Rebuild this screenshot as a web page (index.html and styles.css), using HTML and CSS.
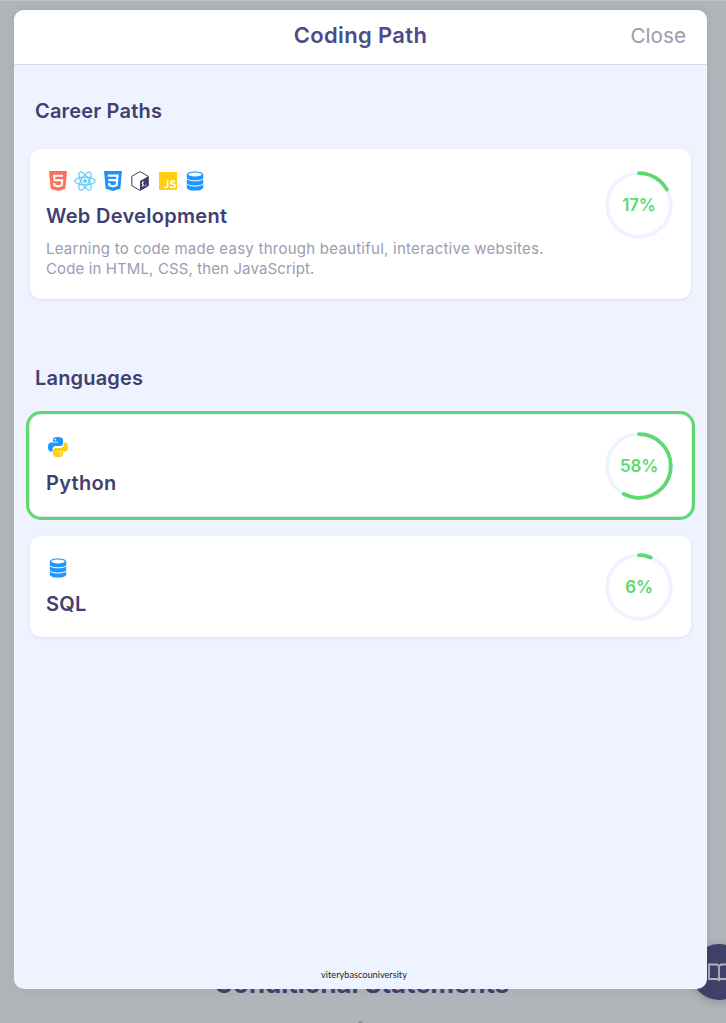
FILE: index.html
```html
<!DOCTYPE html>
<html lang="en">
<head>
    <meta charset="UTF-8">
    <meta name="viewport" content="width=device-width, initial-scale=1.0">
    <title>Coding Path</title>
    <link rel="stylesheet" href="styles.css">
</head>
<body>

<!-- icons used more than once -->
<svg class="defs" width="0" height="0">
    <symbol id="database" viewBox="0 0 20 20">
        <path fill="#1e96ff" d="M1.8 3.5C1.8 1.6 5.3.4 10 .4s8.2 1.2 8.2 3.1v12.900c0 1.900-3.500 3.200-8.200 3.200s-8.200-1.300-8.200-3.200z"/>
        <ellipse cx="10" cy="3.4" rx="6.8" ry="2" fill="#fff"/>
        <path fill="none" stroke="#fff" stroke-width="1" d="M1.300 7.300c1.200 1.700 4.400 2.500 8.700 2.500s7.500-.8 8.700-2.500M1.300 12.500c1.200 1.700 4.400 2.500 8.700 2.500s7.500-.8 8.700-2.500"/>
    </symbol>
</svg>

<div class="page-title">Conditional Statements</div>
<div class="page-dot"></div>
<div class="book-button">
    <svg width="22" height="19" viewBox="0 0 22 19" fill="none" stroke="#b0b5bb" stroke-width="1.8">
        <path d="M1 1.5h8L11 3l2-1.5h8v14.5h-8l-2 1.3-2-1.3H1zM11 3v14"/>
    </svg>
</div>

<div class="modal">
    <header>
        <h1>Coding Path</h1>
        <a class="close">Close</a>
    </header>

    <main>
        <h2 class="career-title">Career Paths</h2>
        <div class="card career">
            <div class="info">
                <div class="icons">
                    <svg viewBox="0 0 20 20">
                        <path fill="#ff705c" d="M1 0h18l-1.7 17.7L10 20l-7.3-2.3z"/>
                        <path fill="none" stroke="#fff" stroke-width="2" d="M15 4.8H6.1l.4 4.5h7.7l-.5 5L10 15.4l-3.600-1.100-.2-2.300"/>
                    </svg>
                    <svg class="react" viewBox="0 0 22 20" fill="none" stroke="#5cc9fa" stroke-width="1.2">
                        <ellipse cx="11" cy="10" rx="10.2" ry="3.9"/>
                        <ellipse cx="11" cy="10" rx="10.2" ry="3.9" transform="rotate(60 11 10)"/>
                        <ellipse cx="11" cy="10" rx="10.2" ry="3.9" transform="rotate(120 11 10)"/>
                        <circle cx="11" cy="10" r="1.9" fill="#5cc9fa" stroke="none"/>
                    </svg>
                    <svg viewBox="0 0 20 20">
                        <path fill="#1e90ff" d="M1 0h18l-1.7 17.7L10 20l-7.3-2.3z"/>
                        <path fill="none" stroke="#fff" stroke-width="2.2" d="M4.8 4.700h9.700l-.8 9.500-3.700 1.200-3.700-1.200-.2-2.200M5.300 9.200h8.600"/>
                    </svg>
                    <svg viewBox="0 0 20 20">
                        <path fill="#fff" stroke="#3b3d68" stroke-width="1" stroke-linejoin="round" d="M10 .6l8.2 4.7v9.4L10 19.4l-8.2-4.7V5.3z"/>
                        <path fill="#3b3d68" d="M10 10l8.4-4.8v9.6L10 19.7z"/>
                        <path fill="none" stroke="#fff" stroke-width=".9" d="M13.6 11c-1-.1-1.700.6-1.600 1.300.2.9 1.500.5 1.500 1.500 0 .7-.8 1.300-1.600 1.100M12.800 10.300v5.400M14.700 14.800l1.500-.8"/>
                    </svg>
                    <svg viewBox="0 0 20 20">
                        <path fill="#ffcf14" d="M1 1h18v18H1z"/>
                        <path fill="none" stroke="#fff" stroke-width="1.6" d="M9.600 9.500v5.400c0 1.800-2.200 2.200-3.300.6M17 11c-.9-1.500-4.300-1.300-4.300.5 0 2.100 4.500.9 4.500 3.200 0 2.100-3.600 2.400-4.900.5"/>
                    </svg>
                    <svg><use href="#database"/></svg>
                </div>
                <h3 class="web">Web Development</h3>
                <p><span class="line-one">Learning to code made easy through beautiful, interactive websites.</span><br>Code in HTML, CSS, then JavaScript.</p>
            </div>
            <div class="ring">
                <svg viewBox="0 0 68 68">
                    <circle class="track" cx="34" cy="34" r="31.8"/>
                    <circle class="bar" cx="34" cy="34" r="31.8" pathLength="100" stroke-dasharray="17 100"/>
                </svg>
                <span>17%</span>
            </div>
        </div>

        <h2 class="lang-title">Languages</h2>
        <div class="card selected">
            <div class="info">
                <div class="icons">
                    <svg viewBox="0 0 20 20">
                        <path fill="#1e96ff" d="M9.8 0C6.3 0 5 1 5 2.6v2.2h5.2v.7H3C1 5.5 0 7.2 0 10c0 2.7 1 4.5 2.7 4.5h1.8v-2.3c0-1.7 1.3-3.1 3.1-3.1h4.9c1.4 0 2.5-1.1 2.5-2.5v-4C15 .9 13.1 0 9.8 0z"/>
                        <path fill="#ffcf14" d="M10.2 20c3.5 0 4.8-1 4.8-2.6v-2.2H9.8v-.7H17c2 0 3-1.7 3-4.5 0-2.7-1-4.5-2.7-4.5h-1.5v2.3c0 1.7-1.5 3.1-3.3 3.1h-5c-1.400 0-2.500 1.100-2.500 2.500v4C5 19.100 6.900 20 10.200 20z"/>
                        <circle cx="7.3" cy="2.7" r=".9" fill="#fff"/>
                        <circle cx="12.7" cy="17.3" r=".9" fill="#fff"/>
                    </svg>
                </div>
                <h3>Python</h3>
            </div>
            <div class="ring">
                <svg viewBox="0 0 68 68">
                    <circle class="track" cx="34" cy="34" r="31.8"/>
                    <circle class="bar" cx="34" cy="34" r="31.8" pathLength="100" stroke-dasharray="58 100"/>
                </svg>
                <span>58%</span>
            </div>
        </div>
        <div class="card">
            <div class="info">
                <div class="icons">
                    <svg><use href="#database"/></svg>
                </div>
                <h3>SQL</h3>
            </div>
            <div class="ring">
                <svg viewBox="0 0 68 68">
                    <circle class="track" cx="34" cy="34" r="31.8"/>
                    <circle class="bar" cx="34" cy="34" r="31.8" pathLength="100" stroke-dasharray="6 100"/>
                </svg>
                <span>6%</span>
            </div>
        </div>
    </main>

    <footer>viterybascouniversity</footer>
</div>

</body>
</html>
```

FILE: styles.css
```css
* {
    box-sizing: border-box;
}
body {
    font-family: "Inter", "Liberation Sans", sans-serif;
    margin: 0;
    height: 1023px;
    padding: 10px 19px 0 14px;
    background: #b0b5b9;
    color: #3f406f;
    position: relative;
    overflow: hidden;
    box-shadow: inset 0 1px 0 #bdc3c6;
}
h1, h2, h3, p {
    margin: 0;
    white-space: nowrap;
}
.defs {
    position: absolute;
}
.modal {
    position: relative;
    height: 979px;
    border-radius: 10px;
    background: #eff3ff;
    overflow: hidden;
    display: flex;
    flex-direction: column;
    box-shadow: 0 0 10px rgba(60, 70, 80, 0.08);
}
header {
    height: 55px;
    flex: none;
    background: #fff;
    border-bottom: 1px solid #d9dce3;
    display: grid;
    grid-template-columns: 1fr auto 1fr;
    align-items: center;
    padding: 0 21px 4px;
}
h1 {
    grid-column: 2;
    font-size: 22px;
    line-height: 28px;
    font-weight: 600;
    color: #4c4c86;
    letter-spacing: 0.35px;
}
.close {
    justify-self: end;
    font-size: 20.7px;
    line-height: 28px;
    padding-top: 1px;
    color: #9c9caf;
}
main {
    flex: 1;
    padding: 32px 16px 0;
}
h2 {
    font-size: 20px;
    line-height: 28px;
    font-weight: 600;
    padding-left: 5px;
    letter-spacing: 0.18px;
}
.career-title {
    margin-bottom: 24px;
}
.lang-title {
    margin-top: 65px;
    margin-bottom: 23px;
}
.card {
    height: 101px;
    background: #fff;
    border-radius: 11px;
    box-shadow: 0 1px 3px rgba(80, 90, 140, 0.14);
    display: flex;
    justify-content: space-between;
    padding: 16px 18px 0 16px;
}
.career {
    height: 150px;
    padding-top: 21px;
}
.selected {
    outline: 3px solid #5ed970;
    outline-offset: 1px;
    margin-bottom: 20px;
}
.icons {
    display: flex;
    gap: 7.6px;
    margin-left: 1.5px;
    margin-top: 1px;
    height: 20px;
}
.card:not(.career) .icons {
    margin-top: 6px;
}
.icons svg {
    width: 20px;
    height: 20px;
}
.icons .react {
    width: 22px;
    margin: 0 -1px;
}
h3 {
    font-size: 20px;
    line-height: 28px;
    font-weight: 600;
    margin-top: 12px;
    letter-spacing: 0.3px;
}
.web {
    margin-top: 11px;
}
p {
    margin-top: 9px;
    font-size: 15px;
    line-height: 20px;
    color: #9c9cb1;
    letter-spacing: 0.12px;
}
.line-one {
    letter-spacing: 0.25px;
}
.ring {
    width: 68px;
    height: 68px;
    margin-top: 0.5px;
    display: grid;
    place-items: center;
    flex: none;
}
.ring svg {
    grid-area: 1 / 1;
    width: 68px;
    height: 68px;
    transform: rotate(-90deg);
}
.ring span {
    grid-area: 1 / 1;
    font-size: 17px;
    font-weight: 600;
    color: #5ed970;
    letter-spacing: -0.2px;
    z-index: 1;
}
circle.track,
circle.bar {
    fill: none;
    stroke: #eff3ff;
    stroke-width: 3.8;
}
circle.bar {
    stroke: #5ed970;
    stroke-linecap: round;
}
footer {
    text-align: center;
    font-family: "Lato", sans-serif;
    font-size: 9.2px;
    line-height: 12px;
    color: #222;
    padding: 0 0 8px 7px;
}
.page-title {
    position: absolute;
    left: 214px;
    top: 966px;
    font-size: 25.8px;
    line-height: 36px;
    font-weight: 700;
    white-space: nowrap;
}
.page-dot {
    position: absolute;
    left: 358px;
    top: 1021px;
    width: 5px;
    height: 5px;
    border-radius: 50%;
    background: #858b90;
}
.book-button {
    position: absolute;
    left: 691px;
    top: 944px;
    width: 56px;
    height: 56px;
    border-radius: 50%;
    background: #3e4069;
    display: grid;
    place-items: center;
    box-shadow: 0 2px 9px rgba(40, 45, 70, 0.3);
}
```
